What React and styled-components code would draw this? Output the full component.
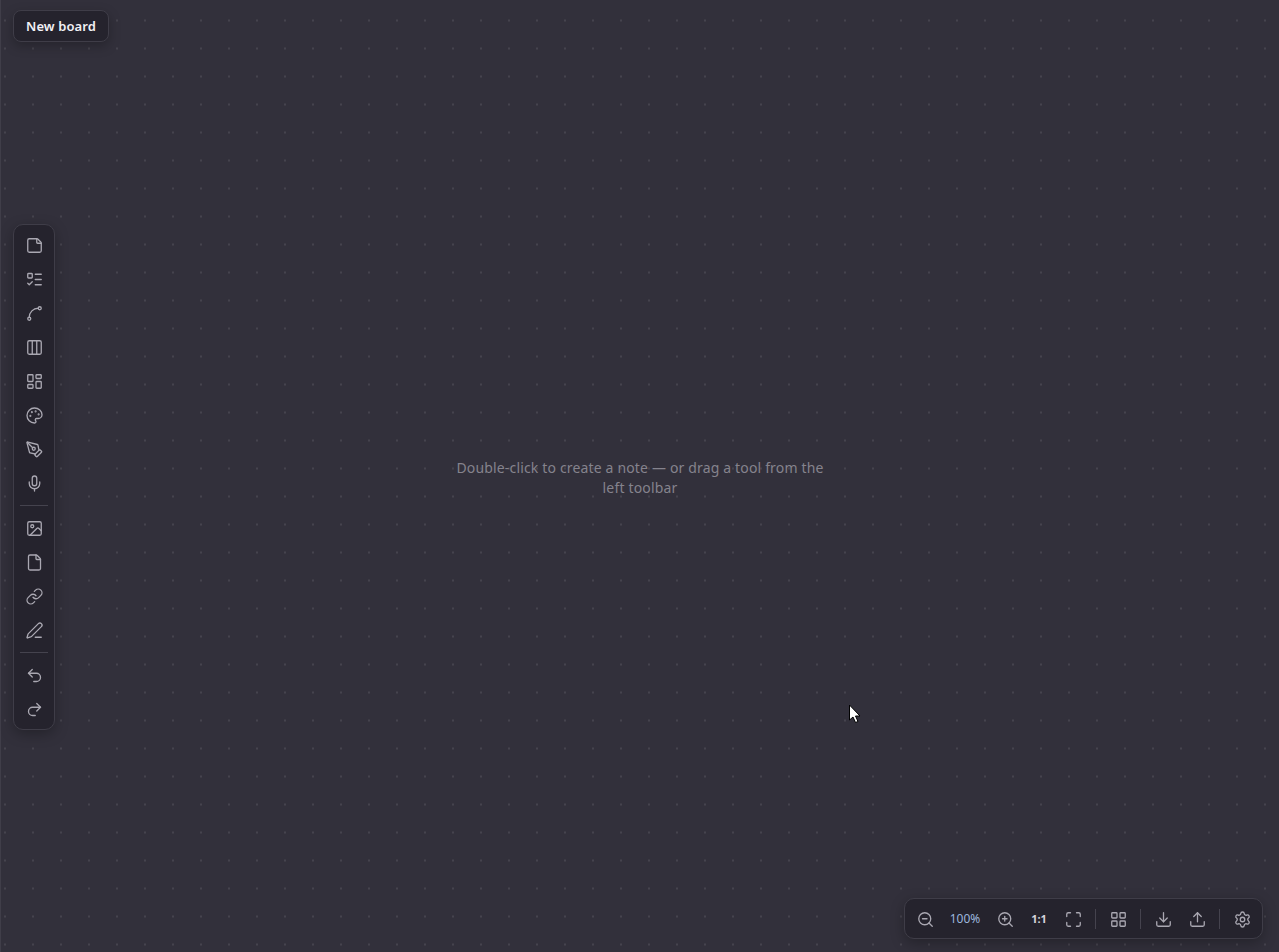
import React from 'react';
import styled, { createGlobalStyle } from 'styled-components';
import {
  StickyNote,
  ListTodo,
  Spline,
  Columns3,
  LayoutDashboard,
  Palette,
  PenTool,
  Mic,
  Image,
  File,
  Link,
  PenLine,
  Undo2,
  Redo2,
  ZoomIn,
  ZoomOut,
  Maximize,
  LayoutGrid,
  Download,
  Upload,
  Settings,
} from 'lucide-react';

const GlobalStyle = createGlobalStyle`
  html, body {
    margin: 0;
    height: 100%;
    overflow: hidden;
    background: #32303b;
    font-family: "Noto Sans", "Liberation Sans", sans-serif;
  }
`;

const Canvas = styled.div`
  position: relative;
  width: 100vw;
  height: 100vh;
  padding-top: 4px;
  display: flex;
  align-items: center;
  justify-content: center;
  box-sizing: border-box;
  border-left: 1px solid #403e49;
  background-color: #32303b;
  background-image: radial-gradient(circle, #45434e 1px, transparent 1.2px);
  background-size: 28px 28px;
  background-position: -10px 6.5px;
`;

const Hint = styled.p`
  width: 384px;
  margin: 0;
  text-align: center;
  font-size: 14px;
  line-height: 20px;
  letter-spacing: 0.16px;
  color: #85838d;
`;

const BoardTitle = styled.div`
  position: absolute;
  top: 10px;
  left: 12px;
  height: 32px;
  padding: 0 12px;
  display: flex;
  align-items: center;
  box-sizing: border-box;
  border-radius: 8px;
  border: 1px solid #3f3d48;
  background: #25232d;
  box-shadow: 0 4px 12px rgba(0, 0, 0, 0.25);
  color: #f2f1f5;
  font-size: 13px;
  font-weight: 600;
  letter-spacing: 0.1px;
`;

const Toolbar = styled.nav`
  position: absolute;
  top: 224px;
  left: 12px;
  width: 42px;
  padding: 3px 0;
  display: flex;
  flex-direction: column;
  align-items: center;
  box-sizing: border-box;
  border-radius: 10px;
  border: 1px solid #3f3d48;
  background: #25232d;
  box-shadow: 0 4px 14px rgba(0, 0, 0, 0.28);
`;

const ToolButton = styled.button`
  width: 34px;
  height: 34px;
  padding: 0;
  display: flex;
  align-items: center;
  justify-content: center;
  border: 0;
  background: none;
  color: #aaa8b2;
  font-family: inherit;
  & svg {
    transform: translate(0.5px, 0.5px);
  }
`;

const ToolDivider = styled.div`
  width: 28px;
  height: 1px;
  margin: 5px 0;
  background: #45434e;
`;

const ZoomBar = styled.div`
  position: absolute;
  right: 16px;
  bottom: 13px;
  height: 41px;
  padding: 0 3px;
  display: flex;
  align-items: center;
  box-sizing: border-box;
  border-radius: 10px;
  border: 1px solid #3f3d48;
  background: #25232d;
  box-shadow: 0 4px 14px rgba(0, 0, 0, 0.28);
`;

const ZoomValue = styled.span`
  width: 46px;
  text-align: center;
  font-size: 12px;
  color: #9db7dd;
`;

const BarButton = styled(ToolButton)`
  font-size: 11px;
  font-weight: 700;
  color: ${(p) => (p.$strong ? '#d5d3da' : '#aaa8b2')};
`;

const BarDivider = styled.div`
  width: 1px;
  height: 20px;
  margin: 0 5px;
  background: #45434e;
`;

const Cursor = styled.svg`
  position: absolute;
  left: 847px;
  top: 704px;
`;

const topTools = [StickyNote, ListTodo, Spline, Columns3, LayoutDashboard, Palette, PenTool, Mic];
const assetTools = [Image, File, Link, PenLine];
const historyTools = [Undo2, Redo2];
const iconProps = { size: 18, strokeWidth: 1.75 };

const renderTools = (tools) =>
  tools.map((Icon, i) => (
    <ToolButton key={i}>
      <Icon {...iconProps} />
    </ToolButton>
  ));

export default function App() {
  return (
    <>
      <GlobalStyle />
      <Canvas>
        <Hint>Double-click to create a note — or drag a tool from the left toolbar</Hint>
        <BoardTitle>New board</BoardTitle>
        <Toolbar>
          {renderTools(topTools)}
          <ToolDivider />
          {renderTools(assetTools)}
          <ToolDivider />
          {renderTools(historyTools)}
        </Toolbar>
        <ZoomBar>
          <BarButton><ZoomOut {...iconProps} /></BarButton>
          <ZoomValue>100%</ZoomValue>
          <BarButton><ZoomIn {...iconProps} /></BarButton>
          <BarButton $strong>1:1</BarButton>
          <BarButton><Maximize {...iconProps} /></BarButton>
          <BarDivider />
          <BarButton><LayoutGrid {...iconProps} /></BarButton>
          <BarDivider />
          <BarButton><Download {...iconProps} /></BarButton>
          <BarButton><Upload {...iconProps} /></BarButton>
          <BarDivider />
          <BarButton><Settings {...iconProps} /></BarButton>
        </ZoomBar>
        <Cursor width="13" height="20" viewBox="0 0 13 20">
          <path d="M1.5 1 V16 L5 13 L7.5 18.5 L10 17.5 L7.5 12 L12 12 Z" fill="#fff" stroke="#000" strokeWidth="1" />
        </Cursor>
      </Canvas>
    </>
  );
}
